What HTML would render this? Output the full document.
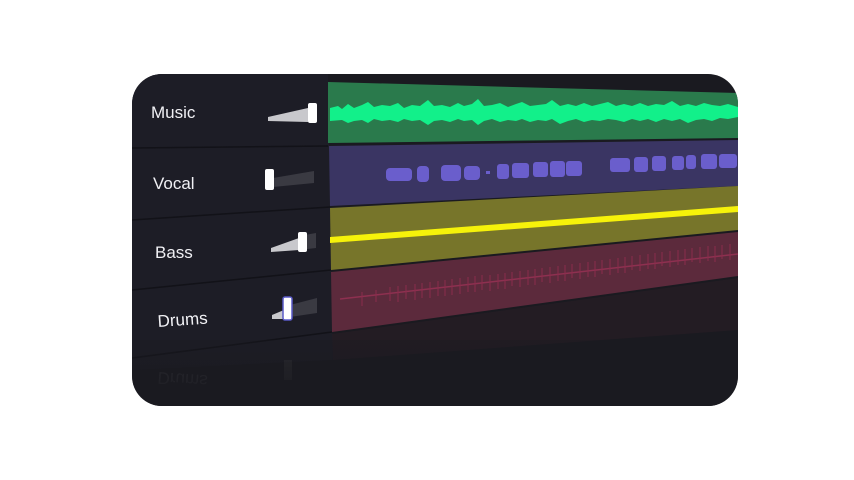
<!DOCTYPE html>
<html><head><meta charset="utf-8"><style>
html,body{margin:0;padding:0;background:#fff;width:854px;height:480px;overflow:hidden}
svg{display:block}
text{font-family:"Liberation Sans",sans-serif;fill:#f0f0f4}
</style></head><body>
<svg width="854" height="480" viewBox="0 0 854 480">
<defs>
<clipPath id="c"><rect x="132" y="74" width="606" height="332" rx="30"/></clipPath>
<linearGradient id="fade" x1="0" y1="0" x2="0" y2="1">
<stop offset="0" stop-color="#1a1a20" stop-opacity="0.3"/><stop offset="1" stop-color="#1a1a20" stop-opacity="1"/></linearGradient>
</defs>
<g clip-path="url(#c)">
<rect x="132" y="74" width="606" height="332" fill="#1a1a20"/>
<polygon points="132,74 328,74 333,360 132,370" fill="#1d1d26"/>
<line x1="132" y1="148" x2="328" y2="146" stroke="#121218" stroke-width="1.5"/>
<line x1="132" y1="220" x2="330" y2="207" stroke="#121218" stroke-width="1.5"/>
<line x1="132" y1="290" x2="331" y2="270" stroke="#121218" stroke-width="1.5"/>
<line x1="132" y1="358" x2="332" y2="332" stroke="#121218" stroke-width="1.5"/>
<text x="151" y="118" font-size="17">Music</text>
<text x="153" y="189" font-size="17">Vocal</text>
<text x="155" y="258" font-size="17">Bass</text>
<text x="158" y="327" font-size="17" transform="rotate(-4 158 327)">Drums</text>
<text x="158" y="372" font-size="17" transform="scale(1,-1) translate(0,-744) rotate(-4 158 372)" opacity="0.12">Drums</text>
<polygon points="268,117 308,108 308,122 268,121" fill="#c8c8cc"/>
<rect x="308" y="103" width="9" height="20" rx="2" fill="#fff"/>
<polygon points="273,178 314,171 314,183 273,187" fill="#3a3a42"/>
<rect x="265" y="169" width="9" height="21" rx="2" fill="#fff"/>
<polygon points="299,236 316,233 316,248 299,250" fill="#3a3a42"/>
<polygon points="271,248 299,238 299,250 271,252" fill="#c8c8cc"/>
<rect x="298" y="232" width="9" height="20" rx="2" fill="#fff"/>
<polygon points="290,305 317,298 317,313 290,317" fill="#3a3a42"/>
<polygon points="272,315 284,310 284,319 272,319" fill="#c8c8cc"/>
<rect x="283" y="297" width="9" height="23" rx="2" fill="#fff" stroke="#5a5ac8" stroke-width="1.5"/>
<rect x="284" y="360" width="8" height="20" fill="#555" opacity="0.3"/>
<polygon points="328,82 738,93 738,138 328,143" fill="#2a7a4c"/>
<polygon points="329,146 738,140 738,186 330,206" fill="#3a3563"/>
<polygon points="330,208 738,186 738,230 331,270" fill="#77752a"/>
<polygon points="331,272 738,232 738,276 332,332" fill="#5c2a3c"/>
<polygon points="332,334 738,278 738,330 333,360" fill="#2a1e26" opacity="0.6"/>
<path d="M330,108 L338,106 L342,109 L348,104 L354,108 L362,105 L368,102 L374,107 L382,105 L390,106 L398,103 L404,108 L412,105 L420,106 L428,100 L434,106 L442,105 L450,107 L458,103 L464,106 L472,104 L478,99 L484,106 L492,105 L500,103 L508,107 L516,104 L522,102 L530,106 L538,105 L546,104 L552,100 L560,106 L568,104 L576,106 L584,103 L592,106 L600,104 L608,102 L616,106 L624,104 L632,106 L640,103 L648,106 L656,104 L664,105 L672,101 L680,106 L688,104 L696,106 L704,103 L712,105 L720,106 L728,104 L738,107 L738,117 L728,119 L720,118 L712,121 L704,119 L696,120 L688,123 L680,119 L672,121 L664,119 L656,122 L648,119 L640,121 L632,119 L624,122 L616,120 L608,119 L600,121 L592,120 L584,122 L576,119 L568,121 L560,124 L552,119 L546,121 L538,120 L530,122 L522,119 L516,121 L508,120 L500,122 L492,119 L484,121 L478,125 L472,120 L464,121 L458,119 L450,122 L442,120 L434,121 L428,125 L420,120 L412,121 L404,119 L398,122 L390,120 L382,121 L374,119 L368,123 L362,120 L354,121 L348,123 L342,120 L330,121 Z" fill="#12f08a"/>
<g fill="#6a5ecc">
<rect x="386" y="168" width="26" height="13" rx="4"/>
<rect x="417" y="166" width="12" height="16" rx="4"/>
<rect x="441" y="165" width="20" height="16" rx="4"/>
<rect x="464" y="166" width="16" height="14" rx="4"/>
<rect x="486" y="171" width="4" height="3"/>
<rect x="497" y="164" width="12" height="15" rx="3"/>
<rect x="512" y="163" width="17" height="15" rx="3"/>
<rect x="533" y="162" width="15" height="15" rx="3"/>
<rect x="550" y="161" width="15" height="16" rx="3"/>
<rect x="566" y="161" width="16" height="15" rx="3"/>
<rect x="610" y="158" width="20" height="14" rx="3"/>
<rect x="634" y="157" width="14" height="15" rx="3"/>
<rect x="652" y="156" width="14" height="15" rx="3"/>
<rect x="672" y="156" width="12" height="14" rx="3"/>
<rect x="686" y="155" width="10" height="14" rx="3"/>
<rect x="701" y="154" width="16" height="15" rx="3"/>
<rect x="719" y="154" width="18" height="14" rx="3"/>
</g>
<polygon points="330,237 738,206 738,212 330,243" fill="#f6f20a"/>
<line x1="340" y1="299" x2="738" y2="254" stroke="#8e3050" stroke-width="1.5"/>
<g stroke="#8a2c4c" stroke-width="1">
<path d="M362,292v14M376,290v12M390,287v14M398,286v16M406,285v14M415,284v16M422,283v15M430,282v16M438,281v15M445,280v16M452,279v16M460,278v16M468,277v15M475,276v16M482,275v15M490,275v16M498,274v15M505,273v16M512,272v14M520,271v16M528,270v15M535,269v16M542,268v14M550,267v16M558,266v15M565,265v16M572,264v14M580,263v16M588,262v15M595,261v16M602,260v14M610,259v16M618,258v15M625,257v16M632,256v14M640,255v16M648,254v15M655,253v16M662,252v14M670,251v16M678,250v15M685,249v16M692,248v14M700,247v16M708,246v15M715,246v16M722,245v14M730,244v16"/>
</g>
<rect x="132" y="340" width="606" height="66" fill="url(#fade)"/>
</g>
</svg>
</body></html>
